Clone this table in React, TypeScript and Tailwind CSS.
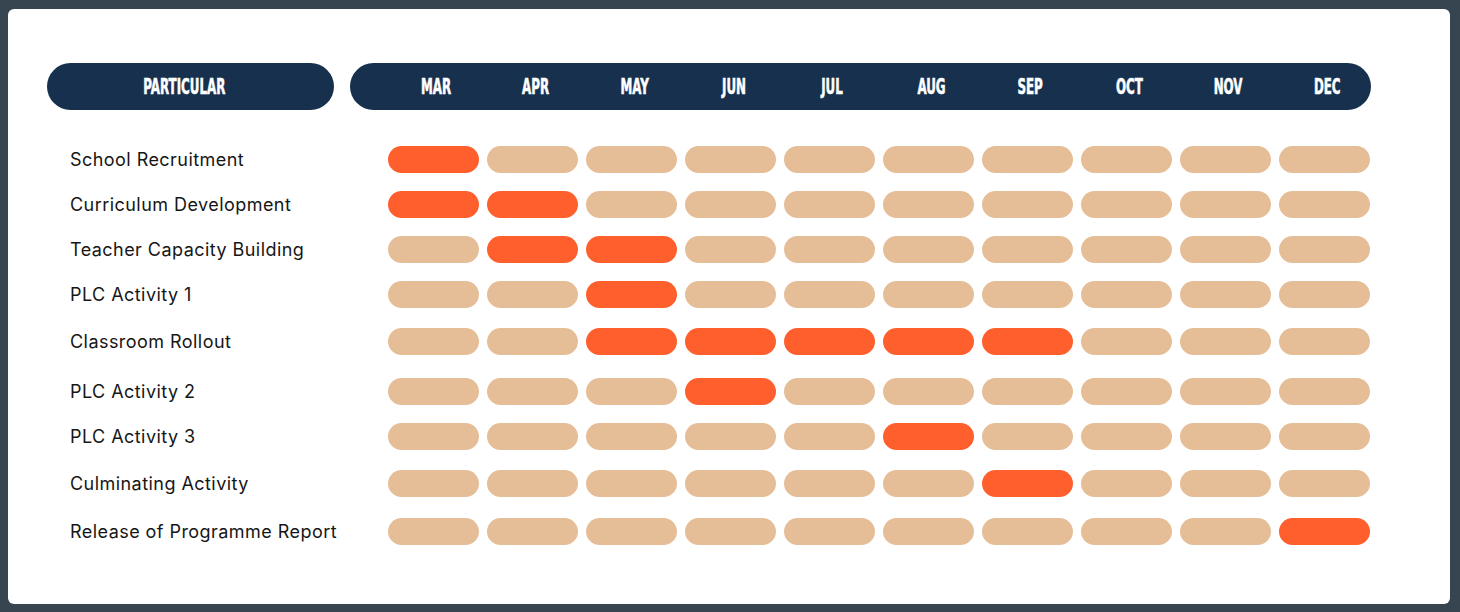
const months = ["MAR", "APR", "MAY", "JUN", "JUL", "AUG", "SEP", "OCT", "NOV", "DEC"]

// active months per activity (index into months), plus top margin to match the uneven spacing
const rows = [
  { label: "School Recruitment", active: [0], mt: "mt-[36px]" },
  { label: "Curriculum Development", active: [0, 1], mt: "mt-[18px]" },
  { label: "Teacher Capacity Building", active: [1, 2], mt: "mt-[18px]" },
  { label: "PLC Activity 1", active: [2], mt: "mt-[18px]" },
  { label: "Classroom Rollout", active: [2, 3, 4, 5, 6], mt: "mt-[20px]" },
  { label: "PLC Activity 2", active: [3], mt: "mt-[23px]" },
  { label: "PLC Activity 3", active: [5], mt: "mt-[18px]" },
  { label: "Culminating Activity", active: [6], mt: "mt-[20px]" },
  { label: "Release of Programme Report", active: [9], mt: "mt-[21px]" },
]

function HeadLabel({ text }: { text: string }) {
  return (
    <span className="inline-block origin-center scale-x-[0.6] font-['DejaVu_Sans_Condensed','DejaVu_Sans',sans-serif] text-[22px] font-bold leading-none text-white [-webkit-text-stroke:0.6px_white]">
      {text}
    </span>
  )
}

export default function App() {
  return (
    <div className="h-[612px] w-[1460px] bg-[#36454f] pb-[8px] pl-[8px] pr-[10px] pt-[9px]">
      <div className="h-full w-full rounded-md bg-white pl-[39px] pt-[54px] font-['Inter',sans-serif]">
        {/* Header */}
        <div className="flex gap-[16px]">
          <div className="flex h-[47px] w-[287px] items-center justify-center rounded-full bg-[#17304d] pr-[12px]">
            <HeadLabel text="PARTICULAR" />
          </div>
          <div className="grid h-[47px] w-[1021px] grid-cols-[repeat(10,91px)] items-center gap-[8px] rounded-full bg-[#17304d] pl-[41px]">
            {months.map((m) => (
              <div key={m} className="flex justify-center">
                <HeadLabel text={m} />
              </div>
            ))}
          </div>
        </div>

        {/* Rows */}
        {rows.map((row) => (
          <div key={row.label} className={`flex items-center gap-[16px] ${row.mt}`}>
            <div className="w-[287px] shrink-0 whitespace-nowrap pl-[23px] text-[18px] leading-[27px] tracking-[0.45px] text-[#161616]">
              {row.label}
            </div>
            <div className="grid grid-cols-[repeat(10,91px)] gap-[8px] pl-[38px]">
              {months.map((m, i) => (
                <div
                  key={m}
                  className={`h-[27px] rounded-full ${
                    row.active.includes(i) ? "bg-[#ff5f2c]" : "bg-[#e5be97]"
                  }`}
                />
              ))}
            </div>
          </div>
        ))}
      </div>
    </div>
  )
}
